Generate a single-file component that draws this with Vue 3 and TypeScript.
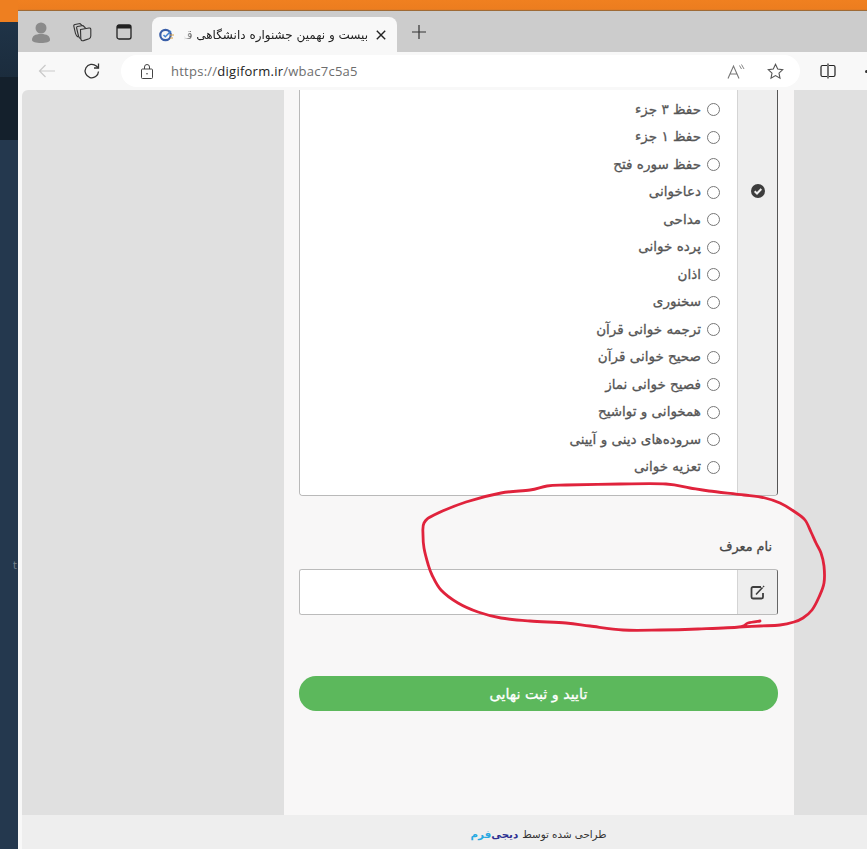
<script setup lang="ts">
const options: string[] = [
  'حفظ ۳ جزء',
  'حفظ ۱ جزء',
  'حفظ سوره فتح',
  'دعاخوانی',
  'مداحی',
  'پرده خوانی',
  'اذان',
  'سخنوری',
  'ترجمه خوانی قرآن',
  'صحیح خوانی قرآن',
  'فصیح خوانی نماز',
  'همخوانی و تواشیح',
  'سروده‌های دینی و آیینی',
  'تعزیه خوانی',
]

// hand-drawn loop round the field, smoothed from traced points
const points: [number, number][] = [
  [760, 621], [748, 623], [739, 627], [698, 629], [660, 630], [623, 630], [590, 626], [566, 623],
  [530, 621], [501, 618], [478, 612], [458, 603], [441, 590], [432, 575], [428, 564], [424, 548],
  [423, 535], [424, 523], [434, 515], [466, 502], [501, 493], [530, 490], [547, 486], [566, 485],
  [620, 484], [666, 484], [690, 488], [709, 491], [744, 495], [765, 498], [780, 503], [795, 512],
  [805, 520], [811, 532], [816, 543], [821, 553], [824, 566], [824, 583], [819, 597], [812, 610],
  [803, 618], [794, 622], [780, 625], [760, 626], [739, 627],
]

function smooth(pts: [number, number][]): string {
  let d = `M${pts[0][0]} ${pts[0][1]}`
  for (let i = 0; i < pts.length - 1; i++) {
    const p0 = pts[Math.max(i - 1, 0)]
    const p1 = pts[i]
    const p2 = pts[i + 1]
    const p3 = pts[Math.min(i + 2, pts.length - 1)]
    const c1x = p1[0] + (p2[0] - p0[0]) / 6
    const c1y = p1[1] + (p2[1] - p0[1]) / 6
    const c2x = p2[0] - (p3[0] - p1[0]) / 6
    const c2y = p2[1] - (p3[1] - p1[1]) / 6
    d += ` C${c1x} ${c1y} ${c2x} ${c2y} ${p2[0]} ${p2[1]}`
  }
  return d
}

const scribble = smooth(points)
</script>

<template>
  <div class="desk">
    <div class="side">
      <div class="side-orange" />
      <div class="side-top" />
      <div class="side-dark" />
      <div class="side-rest" />
      <span class="side-letter">t</span>
    </div>

    <div class="screen">
      <div class="orange-bar" />
      <div class="browser">
        <div class="tabbar">
          <div class="tab-tools">
            <svg class="ico-profile" width="22" height="24" viewBox="0 0 22 24">
              <circle cx="11" cy="8" r="5.500" fill="#8b8b8b" />
              <path d="M2 20c0-4 3-6 9-6s9 2 9 6c0 2-4 3-9 3s-9-1-9-3z" fill="#8b8b8b" />
            </svg>
            <svg class="ico-collections" width="20" height="20" viewBox="0 0 20 20" fill="none" stroke="#333" stroke-width="1.100">
              <path d="M8.500 7.500 17 6q1.800-.2 1.800 1.500V14q0 2-1.800 2.800l-5.500 1.800q-2.300.6-2.700-1.800z" />
              <path d="M13.500 6 11 3.500 5.500 4.500Q4.300 4.800 4.600 6L6.500 14q.4 1.800 2.200 2.800" />
              <path d="M10.500 3.800 8 1.500 3 2.500Q1.500 2.800 1.800 4.200l1.700 7.300q.5 2 2.500 3.500" />
            </svg>
            <svg class="ico-tabs" width="16" height="16" viewBox="0 0 16 16" fill="none">
              <rect x="1" y="1" width="14" height="14" rx="2" stroke="#222" stroke-width="1.300" />
              <rect x="1" y="1" width="14" height="3.500" fill="#222" />
            </svg>
          </div>

          <div class="tab">
            <svg class="favicon" width="16" height="14" viewBox="0 0 16 14" fill="none">
              <circle cx="6.500" cy="7" r="5.200" stroke="#3a5fa8" stroke-width="2.200" />
              <path d="M4.500 7l1.800 1.800L12 3" stroke="#3f7fd0" stroke-width="1.500" />
              <path d="M11 7h4M11 10h3" stroke="#d9a040" stroke-width="1.200" />
            </svg>
            <span class="tab-title" dir="rtl">بیست و نهمین جشنواره دانشگاهی قرآن</span>
            <svg class="tab-close" width="10" height="10" viewBox="0 0 10 10" stroke="#222" stroke-width="1.400">
              <path d="M.8.800l8.400 8.400M9.200.800 .8 9.200" />
            </svg>
          </div>

          <svg class="tab-new" width="16" height="16" viewBox="0 0 16 16" stroke="#333" stroke-width="1.200">
            <path d="M8 1v14M1 8h14" />
          </svg>
        </div>

        <div class="toolbar">
          <svg class="ico-back" width="18" height="14" viewBox="0 0 18 14" fill="none" stroke="#c9c9c9" stroke-width="1.200">
            <path d="M17 7H1.500M7.500 1 1.500 7l6 6" />
          </svg>
          <svg class="ico-reload" width="18" height="18" viewBox="0 0 18 18" fill="none" stroke="#333" stroke-width="1.300">
            <path d="M15.500 9.500a6.700 6.700 0 1 1-2.200-5.400L15.500 6" />
            <path d="M15.500 1.500V6H11" />
          </svg>

          <div class="address">
            <svg class="ico-lock" width="12" height="15" viewBox="0 0 12 15" fill="none" stroke="#444" stroke-width="1">
              <rect x=".5" y="5" width="11" height="9.500" rx="1" />
              <path d="M3.500 5V3a2.500 2.500 0 0 1 5 0v2" />
              <circle cx="6" cy="9.800" r=".8" fill="#444" stroke="none" />
            </svg>
            <span class="url">https://<b>digiform.ir</b>/wbac7c5a5</span>
            <svg class="ico-read" width="18" height="15" viewBox="0 0 18 15" fill="none" stroke="#777" stroke-width="1.100">
              <path d="M1 14.500 6.500 2l5.500 12.500M3 10h7" />
              <path d="M12.500 1.500l2 3.500M14.500 .5l2.500 4.500" stroke-width=".9" />
            </svg>
            <svg class="ico-star" width="17" height="17" viewBox="0 0 17 17" fill="none" stroke="#555" stroke-width="1.100">
              <path d="M8.500 1.300l2.200 4.700 5 .6-3.700 3.500 1 5.100-4.500-2.600-4.500 2.600 1-5.100L1.300 6.600l5-.6z" />
            </svg>
          </div>

          <svg class="ico-split" width="16" height="16" viewBox="0 0 16 16" fill="none" stroke="#222" stroke-width="1.200">
            <path d="M7 2.500H2.500a1.500 1.500 0 0 0-1.500 1.500v8a1.500 1.500 0 0 0 1.500 1.500H7M9 2.500h4.500A1.500 1.500 0 0 1 15 4v8a1.500 1.500 0 0 1-1.500 1.500H9M8 .5v15" />
          </svg>
          <span class="ico-more" />
        </div>

        <div class="viewport">
          <div class="page-row">
            <div class="gutter" />
            <main class="panel">
              <div class="choice">
                <div class="choice-list" dir="rtl">
                  <label v-for="opt in options" :key="opt" class="option">
                    <span class="radio" />
                    <span class="option-text">{{ opt }}</span>
                  </label>
                </div>
                <div class="addon addon-top">
                  <svg width="14" height="14" viewBox="0 0 14 14">
                    <circle cx="7" cy="7" r="7" fill="#3d3d3d" />
                    <path d="M3.700 7.200 6 9.500l4.300-4.500" fill="none" stroke="#eee" stroke-width="2" />
                  </svg>
                </div>
              </div>

              <div class="field-label" dir="rtl">نام معرف</div>
              <div class="input-row">
                <div class="input" />
                <div class="addon">
                  <svg width="15" height="15" viewBox="0 0 15 15" fill="none" stroke="#3d3d3d" stroke-width="1.800">
                    <path d="M11 2H3a1.500 1.500 0 0 0-1.500 1.500V12A1.500 1.500 0 0 0 3 13.500h8.500A1.500 1.500 0 0 0 13 12V8" />
                    <path d="M6 9.500 12.500 2.500" stroke-width="1.600" />
                    <path d="M13 1l1.200 1" stroke-width="1.200" />
                  </svg>
                </div>
              </div>

              <button class="submit" type="button">تایید و ثبت نهایی</button>
            </main>
            <div class="gutter-right" />
          </div>
          <footer class="footer" dir="rtl">
            <span>طراحی شده توسط</span>
            <b class="brand"><span class="brand-a">دیجی</span><span class="brand-b">فرم</span></b>
          </footer>
        </div>
      </div>
    </div>

    <svg class="scribble" width="867" height="849" viewBox="0 0 867 849" fill="none">
      <path :d="scribble" stroke="#e0233c" stroke-width="2.800" stroke-linejoin="round" stroke-linecap="round" />
    </svg>
  </div>
</template>

<style scoped>
.desk {
  position: relative;
  display: flex;
  width: 867px;
  height: 849px;
  overflow: hidden;
  font-family: 'DejaVu Sans', 'Noto Sans', sans-serif;
}

.side {
  position: relative;
  display: flex;
  flex-direction: column;
  flex: 0 0 18px;
}

.side-orange {
  height: 22px;
  background: #ee7f20;
}

.side-top {
  height: 55px;
  background: linear-gradient(#1f3347, #1b2c3d);
}

.side-dark {
  height: 63px;
  background: #14202c;
}

.side-rest {
  flex: 1;
  background: #24384e;
}

.side-letter {
  position: absolute;
  left: 13px;
  top: 560px;
  font-size: 10px;
  color: #77838f;
}

.screen {
  display: flex;
  flex-direction: column;
  flex: 1;
  min-width: 0;
}

.orange-bar {
  flex: 0 0 11px;
  background: linear-gradient(#f08020 0, #ec7d1f 85%, #7d6240 100%);
}

.browser {
  display: flex;
  flex-direction: column;
  flex: 1;
  min-height: 0;
  background: #f8f8f8;
}

.tabbar {
  display: flex;
  align-items: flex-end;
  flex: 0 0 41px;
  background: #cccccc;
}

.tab-tools {
  display: flex;
  align-items: center;
  height: 41px;
  width: 134px;
  flex: none;
}

.ico-profile {
  margin-left: 12px;
}

.ico-collections {
  margin-left: 20px;
}

.ico-tabs {
  margin-left: 24px;
}

.tab {
  display: flex;
  align-items: center;
  width: 245px;
  height: 35px;
  flex: none;
  padding: 0 11px 0 7px;
  box-sizing: border-box;
  background: #f8f8f8;
  border-radius: 8px 8px 0 0;
}

.tab-title {
  flex: 1;
  min-width: 0;
  margin: 0 8px 0 5px;
  font-size: 12px;
  line-height: 20px;
  color: #222;
  white-space: nowrap;
  overflow: hidden;
  -webkit-mask-image: linear-gradient(to right, transparent 0, transparent 4px, #000 14px);
  mask-image: linear-gradient(to right, transparent 0, transparent 4px, #000 14px);
}

.tab-new {
  align-self: center;
  margin-left: 14px;
}

.toolbar {
  display: flex;
  align-items: center;
  flex: 0 0 38px;
  padding-left: 20px;
  box-sizing: border-box;
  background: #f8f8f8;
}

.ico-back {
  flex: none;
}

.ico-reload {
  flex: none;
  margin-left: 27px;
}

.address {
  display: flex;
  align-items: center;
  flex: none;
  width: 679px;
  height: 32px;
  margin-left: 20px;
  padding: 0 16px 0 20px;
  box-sizing: border-box;
  background: #ffffff;
  border-radius: 16px;
}

.url {
  flex: 1;
  margin-left: 18px;
  font-family: 'Open Sans', sans-serif;
  font-size: 13px;
  letter-spacing: 0.25px;
  color: #6d6d6d;
}

.url b {
  font-weight: 400;
  color: #222;
}

.ico-star {
  margin-left: 22px;
}

.ico-split {
  flex: none;
  margin-left: 20px;
}

.ico-more {
  flex: none;
  width: 3px;
  height: 3px;
  margin-left: 29px;
  border-radius: 50%;
  background: #333;
}

.viewport {
  display: flex;
  flex-direction: column;
  flex: 1;
  min-height: 0;
  padding-left: 4px;
}

.page-row {
  display: flex;
  flex: 1;
  min-height: 0;
  background: #e0e0e0;
  border-top-left-radius: 6px;
  overflow: hidden;
}

.gutter {
  flex: 0 0 262px;
}

.gutter-right {
  flex: 1;
}

.panel {
  display: flex;
  flex-direction: column;
  flex: 0 0 510px;
  box-sizing: border-box;
  padding: 0 16px 0 15px;
  background: #f8f7f7;
}

.choice {
  display: flex;
  flex: none;
  height: 405px;
  border: 1px solid #b9b9b9;
  border-top: 0;
  border-radius: 0 0 4px 4px;
  border-right-color: #555;
  overflow: hidden;
}

.choice-list {
  flex: 1;
  padding: 6px 17px 14px 0;
  background: #fff;
}

.option {
  display: flex;
  align-items: center;
  gap: 6px;
  height: 27.5px;
  font-size: 13.500px;
  color: #555;
  -webkit-text-stroke: 0.3px #555;
}

.option-text {
  padding-bottom: 2px;
}

.radio {
  flex: none;
  width: 11px;
  height: 11px;
  border: 1px solid #777;
  border-radius: 50%;
  background: #fff;
}

.addon {
  display: flex;
  align-items: center;
  justify-content: center;
  flex: 0 0 39px;
  background: #eeeeee;
  border-left: 1px solid #d4d4d4;
}

.addon-top {
  align-items: flex-start;
  padding-top: 94px;
}

.field-label {
  margin-top: 42px;
  padding-right: 6px;
  font-size: 12.800px;
  line-height: 18px;
  color: #444;
  -webkit-text-stroke: 0.3px #444;
}

.input-row {
  display: flex;
  flex: none;
  height: 46px;
  margin-top: 13px;
  border: 1px solid #bbb;
  border-right-color: #666;
  border-radius: 3px;
  box-sizing: border-box;
  overflow: hidden;
}

.input {
  flex: 1;
  background: #fff;
}

.submit {
  flex: none;
  height: 35px;
  margin-top: 61px;
  padding: 0;
  border: 0;
  border-radius: 17px;
  background: #5cb85c;
  color: #fff;
  font-family: inherit;
  font-size: 14.300px;
  -webkit-text-stroke: 0.3px #fff;
}

.footer {
  flex: 0 0 34px;
  display: flex;
  align-items: center;
  justify-content: center;
  gap: 4px;
  padding: 3px 0 0 188px;
  box-sizing: border-box;
  background: #eeeeee;
  font-size: 10.300px;
  color: #333;
}

.brand {
  display: inline-flex;
}

.brand-a {
  color: #2e3192;
}

.brand-b {
  color: #27a9e1;
}

.scribble {
  position: absolute;
  left: 0;
  top: 0;
  pointer-events: none;
}
</style>

<style>
html,
body {
  margin: 0;
  overflow: hidden;
  background: #24384e;
}
</style>
